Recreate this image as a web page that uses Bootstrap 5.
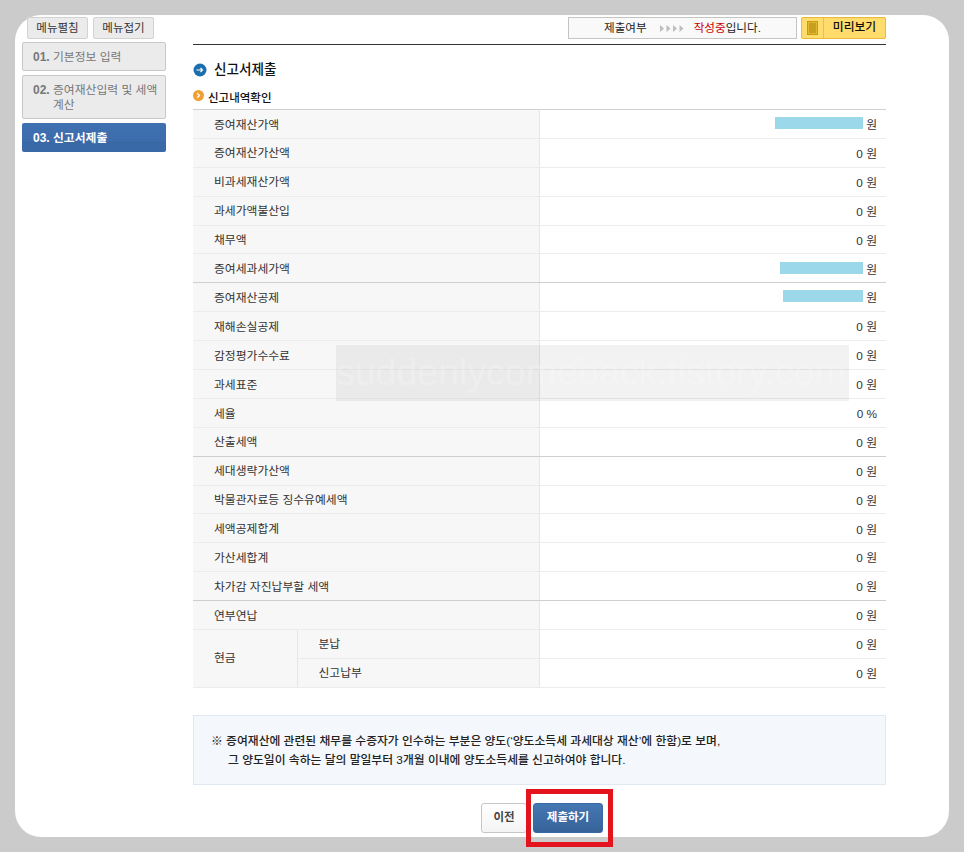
<!DOCTYPE html>
<html lang="ko">
<head>
    <meta charset="UTF-8">
    <meta name="viewport" content="width=device-width, initial-scale=1.0">
    <title>신고서제출</title>
    <link href="https://cdn.jsdelivr.net/npm/bootstrap@5.3.0/dist/css/bootstrap.min.css" rel="stylesheet">
    <style>
        html, body { height: 100%; }
        body {
            background: #cbcbcb;
            font-family: "Liberation Sans", "Noto Sans CJK KR", sans-serif;
            font-size: 12px;
            color: #333;
            overflow: hidden;
        }
        .panel-box {
            position: absolute;
            left: 15px; top: 15px;
            width: 934px; height: 822px;
            background: #fff;
            border-radius: 26px;
            padding: 2px 0 0 7px;
        }
        .side-col { width: 144px; flex: none; }
        .top-row { padding-left: 5px; gap: 5px; }
        .top-btn {
            width: 61px; height: 22px;
            background: #ebebeb;
            border: 1px solid #d2d2d2;
            border-radius: 2px;
            font-size: 11.5px;
            color: #333;
            padding: 0;
            line-height: 20px;
        }
        .side-list { margin-top: 3px; gap: 4px; }
        .side-item {
            display: flex;
            background: #ebebeb;
            border: 1px solid #c8c8c8;
            border-radius: 2px;
            padding: 7px 6px 0 10px;
            color: #777;
            font-size: 11.8px;
            line-height: 14.5px;
            word-break: keep-all;
        }
        .side-item b { width: 20px; flex: none; font-size: 12px; }
        .side-one { height: 29px; }
        .side-two { height: 44px; }
        .side-on {
            height: 29px;
            border: 0;
            padding: 8px 8px 0 11px;
            color: #fff;
            font-weight: 700;
            background: linear-gradient(#3f70b0 0, #3c6cab 19px, #356399 19px, #3a69a8 20px, #3a69a8 100%);
        }
        .main-col { width: 693px; flex: none; margin-left: 27px; }
        .top-strip { height: 28px; border-bottom: 1px solid #333; gap: 4px; }
        .state-box {
            width: 229px; height: 22px;
            background: #f9f9f9;
            border: 1px solid #c4c4c4;
            font-size: 11.6px;
            color: #222;
            padding-left: 35px;
        }
        .state-box em { font-style: normal; color: #c00; }
        .arrow-set { margin: 0 10px 0 13px; }
        .preview-btn {
            width: 85px; height: 22px;
            background: #ffdc6b;
            border: 1px solid #e9b93d;
            border-radius: 2px;
            padding: 0;
            font-size: 11.8px;
            font-weight: 500;
            color: #111;
        }
        .preview-ico {
            width: 22px; height: 100%;
            border-right: 1px solid #efbf45;
            flex: none;
        }
        .preview-txt { flex: 1; text-align: center; }
        .page-title { font-size: 13.6px; font-weight: 500; color: #111; margin: 16px 0 0 0; line-height: 18px; gap: 7px; }
        .sub-title { font-size: 11.5px; font-weight: 500; color: #111; line-height: 14px; margin-top: 11px; gap: 4px; height: 15px; }
        .sub-title svg { margin-top: -4px; }
        .tax-table.table { margin: 4px 0 0; width: 693px; table-layout: fixed; border-top: 1px solid #d0d0d0; border-bottom: 1px solid #d0d0d0; font-size: 11.8px; color: #333; }
        .tax-table.table td {
            height: 28.9px;
            padding: 0;
            vertical-align: middle;
            border-bottom: 1px solid #ececec;
            border-top: 0;
            background: #fff;
            box-shadow: none;
        }
        .tax-table.table td.lab { background: #f7f7f7; padding: 3px 0 0 21px; border-right: 1px solid #e6e6e6; }
        .tax-table.table td.cash { padding-top: 1px; }
        .tax-table.table td.sub { background: #f7f7f7; padding: 1px 0 0 21px; border-right: 1px solid #e6e6e6; }
        .tax-table.table td.val { text-align: right; padding: 4px 9px 0 0; }
        .tax-table.table tr.cut td { border-bottom-color: #cfcfcf; }
        .hide-bar { display: inline-block; height: 12px; background: #9bd8ea; margin-right: 3px; vertical-align: 0; }
        .note-box {
            height: 70px;
            margin-top: 27px;
            background: #f4f7fb;
            border: 1px solid #e1e8f1;
            padding: 16px 0 0 17px;
            font-size: 11.8px;
            font-weight: 500;
            color: #222;
            line-height: 19px;
        }
        .note-box span { display: block; }
        .note-box .note-two { padding-left: 17px; }
        .foot-btns { margin-top: 18px; gap: 6px; padding-left: 288px; }
        .prev-btn {
            width: 46px; height: 30px; padding: 0;
            background: linear-gradient(#fff, #f4f4f4);
            border: 1px solid #c6c6c6;
            border-radius: 3px;
            font-size: 11.5px; font-weight: 700; color: #444;
        }
        .send-btn {
            width: 70px; height: 30px; padding: 0;
            background: linear-gradient(#4577b4, #366399);
            border: 1px solid #3a6aa5;
            border-radius: 3px;
            font-size: 11.5px; font-weight: 700; color: #fff;
        }
        .red-frame {
            position: absolute;
            left: 526px; top: 789px;
            width: 87px; height: 58px;
            border: 5px solid #e4141f;
            pointer-events: none;
        }
        .water-mark {
            position: absolute;
            left: 336px; top: 345px;
            width: 513px; height: 56px;
            background: rgba(0, 0, 0, .05);
            color: rgba(255, 255, 255, .24);
            font-size: 37.5px;
            line-height: 54px;
            white-space: nowrap;
            overflow: hidden;
        }
    </style>
</head>
<body>
    <div class="panel-box d-flex">
        <div class="side-col">
            <div class="top-row d-flex">
                <button class="btn top-btn" type="button">메뉴펼침</button>
                <button class="btn top-btn" type="button">메뉴접기</button>
            </div>
            <div class="side-list d-flex flex-column">
                <div class="side-item side-one"><b>01.</b><span>기본정보 입력</span></div>
                <div class="side-item side-two"><b>02.</b><span>증여재산입력 및 세액 계산</span></div>
                <div class="side-item side-on"><b>03.</b><span>신고서제출</span></div>
            </div>
        </div>

        <div class="main-col">
            <div class="top-strip d-flex justify-content-end align-items-start">
                <div class="state-box d-flex align-items-center">
                    <span>제출여부</span>
                    <svg class="arrow-set" width="24" height="7" viewBox="0 0 24 7"><path fill="#bdbdbd" d="M0 0l4 3.500L0 7zM6.500 0l4 3.500-4 3.500zM13 0l4 3.500-4 3.500zM19.500 0l4 3.500-4 3.500z"/></svg>
                    <span><em>작성중</em>입니다.</span>
                </div>
                <button class="btn preview-btn d-flex align-items-center" type="button">
                    <span class="preview-ico d-flex align-items-center justify-content-center">
                        <svg width="11" height="14" viewBox="0 0 11 14"><rect x=".5" y=".5" width="10" height="13" fill="#e5b92f" stroke="#c59a16"/><path stroke="#a98410" d="M2 3h7M2 5h7M2 7h7M2 9h7M2 11h7"/></svg>
                    </span>
                    <span class="preview-txt">미리보기</span>
                </button>
            </div>

            <h2 class="page-title d-flex align-items-center">
                <svg width="14" height="14" viewBox="0 0 14 14"><circle cx="7" cy="7" r="6.500" fill="#1c6fae"/><path d="M3.500 7h6M7.500 5l2 2-2 2" fill="none" stroke="#fff" stroke-width="1.200"/></svg>
                <span>신고서제출</span>
            </h2>
            <div class="sub-title d-flex align-items-center">
                <svg width="11" height="11" viewBox="0 0 11 11"><circle cx="5.500" cy="5.500" r="5.500" fill="#f0a033"/><path d="M4.200 3.200l2.300 2.300-2.300 2.300" fill="none" stroke="#fff" stroke-width="1.300"/></svg>
                <span>신고내역확인</span>
            </div>

            <table class="table tax-table">
                <colgroup><col style="width:104px"><col style="width:242px"><col></colgroup>
                <tbody>
                    <tr><td class="lab" colspan="2">증여재산가액</td><td class="val"><span class="hide-bar" style="width:88px"></span>원</td></tr>
                    <tr><td class="lab" colspan="2">증여재산가산액</td><td class="val">0 원</td></tr>
                    <tr><td class="lab" colspan="2">비과세재산가액</td><td class="val">0 원</td></tr>
                    <tr><td class="lab" colspan="2">과세가액불산입</td><td class="val">0 원</td></tr>
                    <tr><td class="lab" colspan="2">채무액</td><td class="val">0 원</td></tr>
                    <tr class="cut"><td class="lab" colspan="2">증여세과세가액</td><td class="val"><span class="hide-bar" style="width:83px"></span>원</td></tr>
                    <tr><td class="lab" colspan="2">증여재산공제</td><td class="val"><span class="hide-bar" style="width:80px"></span>원</td></tr>
                    <tr><td class="lab" colspan="2">재해손실공제</td><td class="val">0 원</td></tr>
                    <tr><td class="lab" colspan="2">감정평가수수료</td><td class="val">0 원</td></tr>
                    <tr><td class="lab" colspan="2">과세표준</td><td class="val">0 원</td></tr>
                    <tr><td class="lab" colspan="2">세율</td><td class="val">0 %</td></tr>
                    <tr class="cut"><td class="lab" colspan="2">산출세액</td><td class="val">0 원</td></tr>
                    <tr><td class="lab" colspan="2">세대생략가산액</td><td class="val">0 원</td></tr>
                    <tr><td class="lab" colspan="2">박물관자료등 징수유예세액</td><td class="val">0 원</td></tr>
                    <tr><td class="lab" colspan="2">세액공제합계</td><td class="val">0 원</td></tr>
                    <tr><td class="lab" colspan="2">가산세합계</td><td class="val">0 원</td></tr>
                    <tr class="cut"><td class="lab" colspan="2">차가감 자진납부할 세액</td><td class="val">0 원</td></tr>
                    <tr><td class="lab" colspan="2">연부연납</td><td class="val">0 원</td></tr>
                    <tr><td class="lab cash" rowspan="2">현금</td><td class="sub">분납</td><td class="val">0 원</td></tr>
                    <tr><td class="sub">신고납부</td><td class="val">0 원</td></tr>
                </tbody>
            </table>

            <div class="note-box">
                <span>※ 증여재산에 관련된 채무를 수증자가 인수하는 부분은 양도(‘양도소득세 과세대상 재산’에 한함)로 보며,</span>
                <span class="note-two">그 양도일이 속하는 달의 말일부터 3개월 이내에 양도소득세를 신고하여야 합니다.</span>
            </div>

            <div class="foot-btns d-flex">
                <button class="btn prev-btn" type="button">이전</button>
                <button class="btn send-btn" type="button">제출하기</button>
            </div>
        </div>
    </div>

    <div class="water-mark">suddenlycomeback.tistory.com</div>
    <div class="red-frame"></div>

    <script src="https://cdn.jsdelivr.net/npm/bootstrap@5.3.0/dist/js/bootstrap.bundle.min.js"></script>
</body>
</html>
